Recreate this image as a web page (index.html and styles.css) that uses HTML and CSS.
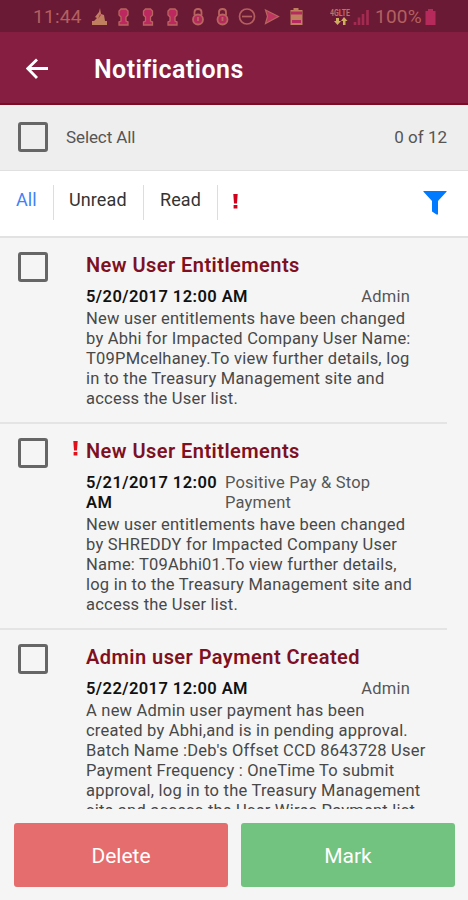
FILE: index.html
```html
<!DOCTYPE html>
<html lang="en">
<head>
    <meta charset="UTF-8">
    <meta name="viewport" content="width=device-width, initial-scale=1.0">
    <title>Notifications</title>
    <link rel="stylesheet" href="styles.css">
</head>
<body>
    <div class="status-bar">
        <span class="clock">11:44</span>
        <svg class="status-icons" width="214" height="20" viewBox="0 0 214 20">
            <path class="tan" d="M9 0l-1 4-4 5 2 1-3 3h11l-1-6-3-1zM1 13h15v4H1z"/>
            <path class="pink" d="M9 6l1 1-3 4z"/>
            <g class="keyhole">
                <path d="M37 17h-9v-3l2-1V9l-2-2V3l2-2h5l2 2v4l-2 2v4l2 1z"/>
                <path d="M61.500 17h-9v-3l2-1V9l-2-2V3l2-2h5l2 2v4l-2 2v4l2 1z"/>
                <path d="M86 17h-9v-3l2-1V9l-2-2V3l2-2h5l2 2v4l-2 2v4l2 1z"/>
            </g>
            <g class="lock">
                <path class="shackle" d="M103.500 7V4q0-3 3.500-3t3.500 3v3M128 7V4q0-3 3.500-3t3.500 3v3"/>
                <circle cx="107" cy="11.500" r="5"/>
                <circle cx="131.500" cy="11.500" r="5"/>
                <path class="shackle" d="M107 9v4M131.500 9v4"/>
            </g>
            <circle class="ring" cx="156" cy="8.500" r="7.500"/>
            <path class="ring" d="M151 8.500h10"/>
            <path class="play" d="M174.500 2l13 6.500-13 7 2-7z"/>
            <path class="tan" d="M202.500 0h5v2h4v15h-12V2h3z"/>
            <path class="pink" d="M200 3.500h11v3h-11zM201 12h9v3h-9z"/>
        </svg>
        <svg class="signal" width="40" height="20" viewBox="0 0 40 20">
            <text class="lte" x="0" y="8" textLength="20" lengthAdjust="spacingAndGlyphs">4GLTE</text>
            <path class="arrows" d="M6 10h3v3h2l-3.500 4L4 13h2zM13 17v-4h-2l3-4 3.500 4h-2v4z"/>
            <path class="bars" d="M25 17v-3M29 17V9.500M33 17V6M37.500 17V2"/>
        </svg>
        <span class="percent">100%</span>
        <svg class="battery" width="11" height="18" viewBox="0 0 11 18"><path d="M3 1h5v2h2.500v14H.5V3H3z"/></svg>
    </div>

    <header class="app-bar">
        <svg class="back" width="22" height="22" viewBox="0 0 22 22"><path d="M11 1.500L1.800 10.500 11 20M2 10.500h20"/></svg>
        <h1>Notifications</h1>
    </header>

    <div class="select-row">
        <span class="checkbox"></span>
        <span class="select-label">Select All</span>
        <span class="count">0 of 12</span>
    </div>

    <nav class="tabs">
        <a class="tab active">All</a>
        <a class="tab unread">Unread</a>
        <a class="tab read">Read</a>
        <svg class="important" width="5" height="15" viewBox="0 0 5 15"><path d="M.3 0h4.400L4 9.500H1zM.6 11h3.800v3.500H.6z"/></svg>
        <svg class="filter" width="24" height="24" viewBox="0 0 24 24"><path d="M.8 0h22.400q.8 0 .3.800L15 10v13.500h-1.500L9 20.500V10L.5.800Q0 0 .8 0z"/></svg>
    </nav>

    <main class="list">
        <article class="item">
            <span class="checkbox"></span>
            <div class="content">
                <h2>New User Entitlements</h2>
                <div class="meta">
                    <span class="date">5/20/2017 12:00 AM</span>
                    <span class="type">Admin</span>
                </div>
                <p>New user entitlements have been changed<br>by Abhi for Impacted Company User Name:<br>T09PMcelhaney.To view further details, log<br>in to the Treasury Management site and<br>access the User list.</p>
            </div>
        </article>
        <article class="item">
            <span class="checkbox"></span>
            <svg class="flag" width="5" height="15" viewBox="0 0 5 15"><path d="M.3 0h4.400L4 9.500H1zM.6 11h3.800v3.500H.6z"/></svg>
            <div class="content">
                <h2>New User Entitlements</h2>
                <div class="meta wrapped">
                    <span class="date">5/21/2017 12:00<br>AM</span>
                    <span class="type">Positive Pay &amp; Stop<br>Payment</span>
                </div>
                <p>New user entitlements have been changed<br>by SHREDDY for Impacted Company User<br>Name: T09Abhi01.To view further details,<br>log in to the Treasury Management site and<br>access the User list.</p>
            </div>
        </article>
        <article class="item">
            <span class="checkbox"></span>
            <div class="content">
                <h2>Admin user Payment Created</h2>
                <div class="meta">
                    <span class="date">5/22/2017 12:00 AM</span>
                    <span class="type">Admin</span>
                </div>
                <p>A new Admin user payment has been<br>created by Abhi,and is in pending approval.<br>Batch Name :Deb's Offset CCD 8643728 User<br>Payment Frequency : OneTime To submit<br>approval, log in to the Treasury Management<br>site and access the User Wires Payment list.</p>
            </div>
        </article>
    </main>

    <footer class="actions">
        <button class="btn delete">Delete</button>
        <button class="btn mark">Mark</button>
    </footer>
</body>
</html>
```
FILE: styles.css
```css
* { box-sizing: border-box; }
body { margin: 0; width: 468px; height: 900px; overflow: hidden; display: flex; flex-direction: column; background: #f5f5f5; font-family: Roboto, sans-serif; color: #333; }
h1, h2, p { margin: 0; }
svg { flex: none; }

.status-bar { height: 32px; flex: none; display: flex; align-items: center; padding: 1px 0 0 33px; background: #6b1a35; color: #b4605f; font-size: 19px; }
.clock { width: 58px; letter-spacing: 0.3px; }
.status-icons { margin-top: 2px; }
.tan { fill: #c08060; }
.pink { fill: #b52a60; }
.keyhole path { fill: #bd2860; stroke: #b9655f; stroke-width: 1.3; }
.lock circle { fill: #b52a5c; stroke: #b9655f; stroke-width: 1.8; }
.shackle { fill: none; stroke: #b9655f; stroke-width: 1.8; }
.ring { fill: none; stroke: #b4605f; stroke-width: 1.7; }
.play { fill: #bd3560; stroke: #b9655f; stroke-width: 1.2; }
.signal { margin: 2px 0 0 25px; }
.lte { fill: #c27064; font-size: 9px; font-weight: 700; }
.arrows { fill: #d0ae60; }
.bars { fill: none; stroke: #a52a52; stroke-width: 2.6; }
.percent { width: 49px; margin-left: 5px; letter-spacing: 0.2px; }
.battery { margin-left: 1px; fill: #b52a5a; }

.app-bar { height: 73px; flex: none; display: flex; align-items: center; padding: 2px 0 0 26px; background: #861e41; border-bottom: 2px solid #7b0c23; color: #fff; }
.back { fill: none; stroke: #fff; stroke-width: 2.8; }
.app-bar h1 { margin: 2px 0 0 46px; font-size: 25px; font-weight: 600; letter-spacing: 0.4px; }

.checkbox { width: 30px; height: 30px; flex: none; border: 3px solid #666; border-radius: 3px; }
.select-row { height: 66px; flex: none; display: flex; align-items: center; padding: 0 21px 2px 18px; background: #eee; border-bottom: 1px solid #e0e0e0; font-size: 17px; color: #555; }
.select-label { margin-left: 18px; letter-spacing: -0.1px; }
.count { margin-left: auto; }

.tabs { height: 67px; flex: none; display: flex; align-items: center; padding: 0 21px 3px 16px; background: #fff; border-bottom: 2px solid #e2e2e2; font-size: 18px; color: #333; }
.tab { height: 35px; line-height: 29px; border-right: 1px solid #ddd; letter-spacing: 0.1px; }
.tab.active { width: 38px; color: #3e82f7; }
.tab.unread { width: 90px; padding-left: 15px; }
.tab.read { width: 74px; padding-left: 16px; }
.important { margin: -2px 0 0 15px; fill: #d0021b; }
.filter { margin: 2px 0 0 auto; fill: #007aff; }

.list { height: 571px; flex: none; overflow: hidden; }
.item { position: relative; display: flex; width: 447px; padding: 14px 0 13px 18px; border-bottom: 2px solid #e4e4e4; }
.flag { position: absolute; left: 73px; top: 17px; fill: #e0101b; }
.content { margin-left: 38px; }
.item h2 { font-size: 20px; line-height: 26px; font-weight: 600; letter-spacing: 0.45px; color: #7e1022; white-space: nowrap; }
.meta { width: 324px; display: flex; justify-content: space-between; margin: 9px 0 2px; font-size: 16.5px; line-height: 20px; letter-spacing: 0.2px; color: #555; }
.meta.wrapped { justify-content: flex-start; }
.wrapped .date { width: 139px; }
.date { font-weight: 600; letter-spacing: 0.42px; color: #111; }
.item p { font-size: 16.5px; line-height: 20px; letter-spacing: 0.22px; white-space: nowrap; color: #484848; }

.actions { flex: none; display: flex; gap: 13px; padding: 14px 13px 0 14px; }
.btn { flex: 1; height: 64px; padding: 2px 0 0; border: 0; border-radius: 3px; color: #fff; font-family: Roboto, sans-serif; font-size: 21px; }
.delete { background: #e56d6e; }
.mark { background: #72c37f; }
```
